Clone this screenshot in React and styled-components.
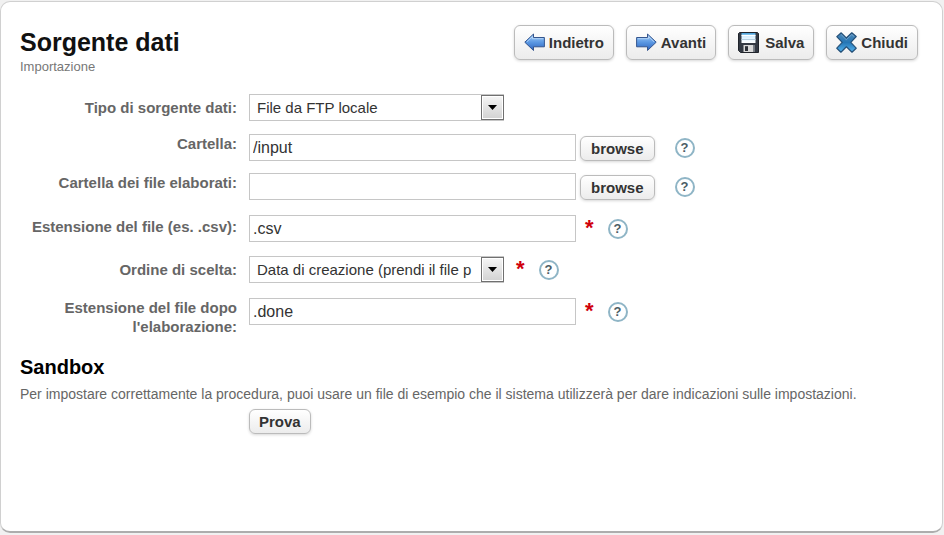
import React from "react";
import styled, { createGlobalStyle } from "styled-components";

const GlobalStyle = createGlobalStyle`
  *, *::before, *::after { box-sizing: border-box; }
  body {
    margin: 0;
    background: #f1f1f1;
    color: #333;
    font-family: "Liberation Sans", Arial, sans-serif;
  }
`;

const Panel = styled.main`
  min-height: calc(100vh - 3px);
  margin: 1px 1px 2px 0;
  padding: 23px 24px 24px 19px;
  background: #fff;
  border: 1px solid #d0d0d0;
  border-bottom: 2px solid #adadad;
  border-radius: 10px;
`;

const Header = styled.header`
  display: flex;
  justify-content: space-between;
  align-items: flex-start;
`;

const Title = styled.h1`
  margin: 0;
  padding-top: 2px;
  color: #111;
  font-size: 25px;
  line-height: 30px;
`;

const Subtitle = styled.p`
  margin: 0;
  color: #777;
  font-size: 13px;
  line-height: 20px;
`;

const Toolbar = styled.div`
  display: flex;
  gap: 12px;
`;

const Button = styled.button`
  display: inline-flex;
  flex: none;
  align-items: center;
  justify-content: center;
  background: linear-gradient(#fff, #ececec);
  border: 1px solid #bbb;
  border-radius: 6px;
  box-shadow: 0 1px 3px rgba(0, 0, 0, 0.16);
  color: #333;
  font-family: inherit;
  font-size: 15px;
  font-weight: bold;
  cursor: pointer;
`;

const ToolButton = styled(Button)`
  gap: ${(p) => p.$gap}px;
  height: 35px;
  padding: 0 9px;
`;

const SmallButton = styled(Button)`
  height: 25px;
  padding: 0 9px;
`;

const Form = styled.form`
  display: flex;
  flex-direction: column;
  padding-top: 17px;
`;

const Row = styled.div`
  display: grid;
  grid-template-columns: 217px minmax(0, 1fr);
  column-gap: 12px;
  align-items: start;
  margin-bottom: ${(p) => p.$after}px;
`;

const Label = styled.label`
  margin-top: ${(p) => p.$top}px;
  color: #666;
  font-size: 15px;
  font-weight: bold;
  line-height: 19px;
  text-align: right;
`;

const Controls = styled.div`
  display: flex;
  align-items: center;
  height: 27px;
`;

const TextInput = styled.input`
  flex: 0 1 327px;
  min-width: 0;
  height: 27px;
  padding: 0 3px;
  background: #fff;
  border: 1px solid #c6c6c6;
  color: #333;
  font-family: inherit;
  font-size: 16px;
`;

const SelectBox = styled.div`
  position: relative;
  flex: 0 1 255px;
`;

const Select = styled.select`
  display: block;
  width: 100%;
  height: 27px;
  padding: 0 23px 0 7px;
  appearance: none;
  background: #fff;
  border: 1px solid #c6c6c6;
  border-radius: 0;
  color: #333;
  font-family: inherit;
  font-size: 15px;
`;

const SelectArrow = styled.span`
  position: absolute;
  top: 1px;
  right: 0;
  display: flex;
  align-items: center;
  justify-content: center;
  width: 23px;
  height: 25px;
  background: linear-gradient(#f5f5f5, #d2d2d2);
  border: 1px solid #707070;
  box-shadow: inset 0 0 0 1px #fff;
  pointer-events: none;
`;

const Browse = styled(SmallButton)`
  margin: 2px 20px 0 4px;
  padding: 0 10px;
`;

const Required = styled.span`
  height: 24px;
  margin: 0 14px 0 ${(p) => p.$before}px;
  color: #d0000c;
  font-size: 22px;
  font-weight: bold;
  line-height: 21px;
`;

const HelpButton = styled.button`
  display: inline-flex;
  align-items: center;
  justify-content: center;
  flex: none;
  width: 20px;
  height: 20px;
  padding: 0;
  background: #fff;
  border: 2px solid #8fb5c6;
  border-radius: 50%;
  color: #4b5d66;
  font-family: inherit;
  font-size: 13px;
  font-weight: bold;
  line-height: 16px;
  cursor: help;
`;

const SectionTitle = styled.h2`
  margin: 0;
  padding-top: 7px;
  color: #000;
  font-size: 20px;
  line-height: 30px;
`;

const Note = styled.p`
  margin: 3px 0 6px;
  color: #666;
  font-size: 14px;
  line-height: 18px;
`;

const TestRow = styled.div`
  padding-left: 229px;
`;

const ArrowIcon = ({ right }) => (
  <svg width="21" height="19" viewBox="0 0 21 19" aria-hidden="true">
    <defs>
      <linearGradient id={right ? "ar" : "al"} x1="0" y1="0" x2="0" y2="1">
        <stop offset="0" stopColor="#a9d0f7" />
        <stop offset="0.5" stopColor="#5b98e3" />
        <stop offset="1" stopColor="#2c62be" />
      </linearGradient>
    </defs>
    <path
      d={right
        ? "M.6 4.5H11.5V1L20.2 9.2 11.5 17.5V13.8H.6Z"
        : "M20.4 4.5H9.5V1L.8 9.2 9.5 17.5V13.8H20.4Z"}
      fill={right ? "url(#ar)" : "url(#al)"}
      stroke="#34558e"
      strokeWidth="1"
      strokeLinejoin="round"
    />
    <path
      d={right ? "M1.8 5.7H12.6V3.6L18 8.8" : "M19.2 5.7H8.4V3.6L3 8.8"}
      fill="none"
      stroke="#c3e0fb"
      strokeWidth="1"
      opacity="0.7"
    />
  </svg>
);

const SaveIcon = () => (
  <svg width="21" height="21" viewBox="0 0 21 21" aria-hidden="true">
    <defs>
      <linearGradient id="disk" x1="0" y1="0" x2="0" y2="1">
        <stop offset="0" stopColor="#3c9ad5" />
        <stop offset="0.35" stopColor="#d6efff" />
        <stop offset="1" stopColor="#fff" />
      </linearGradient>
    </defs>
    <path d="M1.5.5H19.5L20.5 1.5V20.5H2.5L.5 18.5V1.5Z" fill="#333943" stroke="#20242b" />
    <path d="M3.5 1H17.5V11H3.5Z" fill="url(#disk)" />
    <path d="M3.5 3.5H17.5" stroke="#fff" />
    <path d="M3.5 7.5H17.5" stroke="#b4cede" />
    <path d="M5.5 13H15.5V20H5.5Z" fill="#d9d9d9" />
    <path d="M7 14.2H10V19H7Z" fill="#2b2f36" />
    <path d="M15.5 13H17V20H15.5Z" fill="#717780" />
  </svg>
);

const CloseIcon = () => (
  <svg width="21" height="21" viewBox="0 0 21 21" aria-hidden="true">
    <defs>
      <linearGradient id="cross" x1="0" y1="0" x2="0" y2="1">
        <stop offset="0" stopColor="#4f87b5" />
        <stop offset="0.5" stopColor="#2576b5" />
        <stop offset="1" stopColor="#55b4ef" />
      </linearGradient>
    </defs>
    <path
      d="M5.2.8 10.3 6 15.8.8 20.2 4.5 14.8 10.4 20.2 16.2 16 20.2 10.4 14.8 4.9 20.2.8 16.2 6.2 10.4.8 4.6Z"
      fill="url(#cross)"
      stroke="#245078"
      strokeWidth="1.2"
      strokeLinejoin="round"
    />
    <path d="M5.2 2.6 10.3 7.7 15.8 2.5 18.3 4.7" fill="none" stroke="#8fbcdf" opacity="0.6" />
  </svg>
);

const Dropdown = ({ id, options }) => (
  <SelectBox>
    <Select id={id}>
      {options.map((o) => <option key={o}>{o}</option>)}
    </Select>
    <SelectArrow>
      <svg width="9" height="5" viewBox="0 0 9 5" aria-hidden="true">
        <path d="M0 0H9L4.5 5Z" fill="#000" />
      </svg>
    </SelectArrow>
  </SelectBox>
);

const Help = () => <HelpButton type="button" aria-label="Aiuto">?</HelpButton>;

export default function App() {
  return (
    <>
      <GlobalStyle />
      <Panel>
        <Header>
          <div>
            <Title>Sorgente dati</Title>
            <Subtitle>Importazione</Subtitle>
          </div>
          <Toolbar>
            <ToolButton type="button" $gap={4}><ArrowIcon />Indietro</ToolButton>
            <ToolButton type="button" $gap={4}><ArrowIcon right />Avanti</ToolButton>
            <ToolButton type="button" $gap={6}><SaveIcon />Salva</ToolButton>
            <ToolButton type="button" $gap={4}><CloseIcon />Chiudi</ToolButton>
          </Toolbar>
        </Header>

        <Form>
          <Row $after={13}>
            <Label htmlFor="tipo" $top={4}>Tipo di sorgente dati:</Label>
            <Controls>
              <Dropdown id="tipo" options={["File da FTP locale"]} />
            </Controls>
          </Row>
          <Row $after={12}>
            <Label htmlFor="cartella" $top={0}>Cartella:</Label>
            <Controls>
              <TextInput id="cartella" defaultValue="/input" />
              <Browse type="button">browse</Browse>
              <Help />
            </Controls>
          </Row>
          <Row $after={15}>
            <Label htmlFor="elaborati" $top={0}>Cartella dei file elaborati:</Label>
            <Controls>
              <TextInput id="elaborati" />
              <Browse type="button">browse</Browse>
              <Help />
            </Controls>
          </Row>
          <Row $after={14}>
            <Label htmlFor="estensione" $top={2}>Estensione del file (es. .csv):</Label>
            <Controls>
              <TextInput id="estensione" defaultValue=".csv" />
              <Required $before={9}>*</Required>
              <Help />
            </Controls>
          </Row>
          <Row $after={15}>
            <Label htmlFor="ordine" $top={4}>Ordine di scelta:</Label>
            <Controls>
              <Dropdown id="ordine" options={["Data di creazione (prendi il file p"]} />
              <Required $before={12}>*</Required>
              <Help />
            </Controls>
          </Row>
          <Row $after={9}>
            <Label htmlFor="dopo" $top={0}>Estensione del file dopo l'elaborazione:</Label>
            <Controls>
              <TextInput id="dopo" defaultValue=".done" />
              <Required $before={9}>*</Required>
              <Help />
            </Controls>
          </Row>
        </Form>

        <section>
          <SectionTitle>Sandbox</SectionTitle>
          <Note>
            Per impostare correttamente la procedura, puoi usare un file di esempio che il
            sistema utilizzerà per dare indicazioni sulle impostazioni.
          </Note>
          <TestRow>
            <SmallButton type="button">Prova</SmallButton>
          </TestRow>
        </section>
      </Panel>
    </>
  );
}
